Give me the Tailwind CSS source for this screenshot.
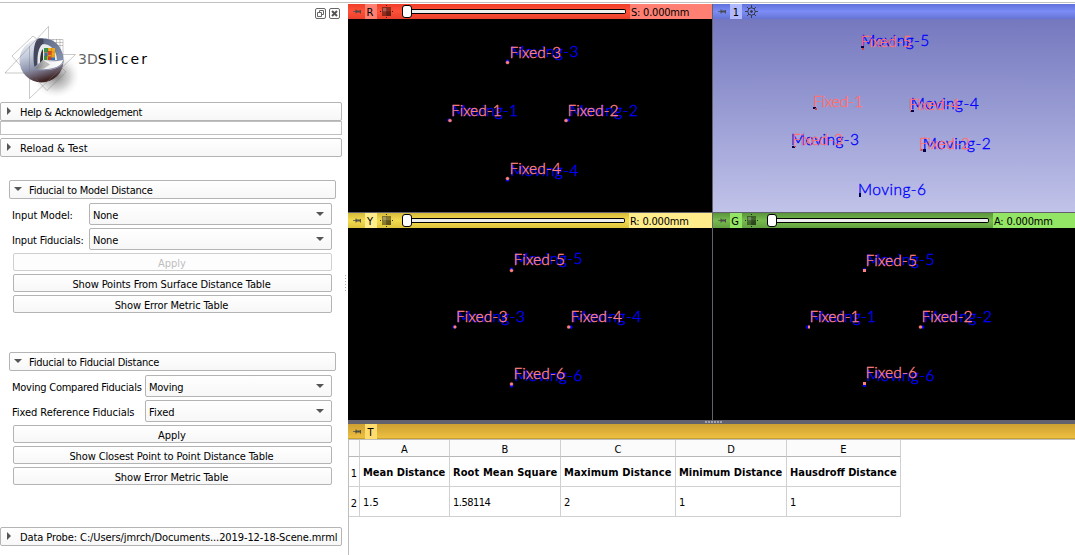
<!DOCTYPE html>
<html lang="en">
<head>
<meta charset="utf-8">
<title>3D Slicer</title>
<script src="https://cdn.jsdelivr.net/npm/@tailwindcss/browser@4"></script>
</head>
<body class="h-[555px] w-[1075px] overflow-hidden bg-white font-['DejaVu_Sans_Condensed','DejaVu_Sans',sans-serif] text-[11px] leading-[14px] text-black">
<svg class="hidden">
  <defs>
    <symbol id="pin" viewBox="0 0 10 9"><path d="M1 4.5h3" stroke="#555" stroke-opacity=".8"/><path d="M4 2.500v4" stroke="#444"/><path d="M4 3.500h4v2h-4z" fill="#444" fill-opacity=".9"/><path d="M8.500 3v3.500" stroke="#444" stroke-opacity=".9"/></symbol>
    <symbol id="cross" viewBox="0 0 13 13"><path d="M6.500 0v1M6.500 12v1M0 6.500h1M12 6.500h1" stroke="#000" stroke-opacity=".8"/><path d="M2 2h9v9H2z" fill="#000" fill-opacity=".42"/><path d="M3 3h3.500v3.500H3z" fill="#fff" fill-opacity=".25"/><path d="M6.500 6.500H11V11H6.500z" fill="#000" fill-opacity=".3"/><path d="M6.500 2v9M2 6.500h9" stroke="#000" stroke-opacity=".12"/></symbol>
    <symbol id="down" viewBox="0 0 8 4"><path d="M0 0h8L4 4z" fill="#555"/></symbol>
    <symbol id="right" viewBox="0 0 4 8"><path d="M0 0v8l4-4z" fill="#555"/></symbol>
  </defs>
</svg>
<div class="flex h-full flex-col">
  <div class="mt-[2px] h-px shrink-0 bg-[#c0c0c0]"></div>
  <div class="flex min-h-0 flex-1">

    <aside class="flex w-[348px] shrink-0 flex-col">
      <div class="flex h-[20px] shrink-0 justify-end gap-[3px] pt-[5px] pr-[8px]">
        <svg class="h-[11px] w-[11px]" viewBox="0 0 11 11" fill="none" stroke="#666"><rect x=".5" y=".5" width="10" height="10" rx="1.5"/><path d="M4.500 4V2.500h4v4H7M2.500 4.500h4v4h-4z"/></svg>
        <svg class="h-[11px] w-[11px]" viewBox="0 0 11 11" fill="none" stroke="#666"><rect x=".5" y=".5" width="10" height="10" rx="1.5"/><path d="M3 3l5 5M8 3L3 8" stroke-width="2" stroke="#555"/></svg>
      </div>
      <div class="flex h-[79px] shrink-0">
        <svg class="h-[79px] w-[78px]" viewBox="0 23 78 79">
          <defs>
            <radialGradient id="sh"><stop offset="0" stop-color="#555" stop-opacity=".75"/><stop offset=".55" stop-color="#888" stop-opacity=".35"/><stop offset="1" stop-color="#fff" stop-opacity="0"/></radialGradient>
            <linearGradient id="ball" x1=".1" y1="0" x2=".4" y2="1"><stop offset="0" stop-color="#f3f6fb"/><stop offset=".4" stop-color="#c3cadb"/><stop offset=".68" stop-color="#8d93ad"/><stop offset=".85" stop-color="#665a68"/><stop offset="1" stop-color="#3e2423"/></linearGradient>
            <linearGradient id="rim" x1="0" y1="0" x2="1" y2="1"><stop offset="0" stop-color="#5b6684"/><stop offset="1" stop-color="#8695b2"/></linearGradient>
            <linearGradient id="dish" x1="0" y1="0" x2="1" y2="0"><stop offset="0" stop-color="#888"/><stop offset=".35" stop-color="#eee"/><stop offset="1" stop-color="#fff"/></linearGradient>
          </defs>
          <ellipse cx="56" cy="76" rx="25" ry="23" fill="url(#sh)"/>
          <circle cx="41.500" cy="60.500" r="22" fill="url(#ball)"/>
          <path d="M42 38.500c12-1 21 8 21.500 22L43 61z" fill="url(#rim)"/>
          <path d="M42.500 44c8 0 14 6 14.500 16l-14 1z" fill="#e6ecee"/>
          <path d="M44 48h11v12H44z" fill="#f0a818"/>
          <path d="M44 48h4v4h-4zM44 56h3v4h-3z" fill="#39934a"/><path d="M48 51h3.500v4H48z" fill="#e84622"/><path d="M44.500 52.500h3v3.500h-3zM51 57.500h4V60h-4z" fill="#2d6fc0"/><path d="M48 56.500h3V60h-3z" fill="#d23a25"/>
          <path d="M47.800 48v12M51.500 48v12M44 52h11M44 56h11" stroke="#653" stroke-opacity=".4" stroke-width=".6"/>
          <path d="M34.500 67c-2-12-.5-27 4-28.500 2-.5 4-.5 5 .5v5c-4 3-5 11-4.500 19z" fill="#45475f"/>
          <path d="M37.500 64.500c-.5-9 1-18 5.500-20.500V60z" fill="#e8eaee"/>
          <path d="M40 63c0-7 1-12 3-14v11z" fill="#333"/>
          <path d="M35 69l8-9c7 2 13 1.500 20.500 0 1 7-13 12-28.500 9z" fill="url(#dish)"/>
          <path d="M43 60l-8 9 9-.5 6-4z" fill="#555" fill-opacity=".35"/>
          <path d="M35 69c12 2.500 27-1 28.500-8.500" fill="none" stroke="#8b90a8" stroke-width="1.200"/>
          <path d="M48.500 26.500L5 73h24M48.500 26.500V39M29.500 70v28.500l46-44H63M29.500 46v24M33 36l-21 20 8 9M33 36l6 5M36 79l11 11.500L66 72l-6-6M49 39.500h14V58M50 42.500h13M54 45.500h9M53 39v3M56.500 39v5M60 39v9" fill="none" stroke="#777" stroke-opacity=".5" stroke-width=".8"/>
        </svg>
        <div class="pt-[27px] font-['DejaVu_Sans'] text-[14px] leading-[18px]"><span class="text-[#666]">3D</span><span class="tracking-[2.1px]">Slicer</span></div>
      </div>
      <div class="flex h-[19px] w-[342px] shrink-0 items-center rounded-[2px] border border-[#b4b4b4] bg-linear-to-b from-white to-[#f7f7f7] pl-[6px]"><svg class="mb-px h-[8px] w-[4px] shrink-0"><use href="#right"/></svg><span class="ml-[9px] pt-[2px] tracking-[-0.27px]">Help &amp; Acknowledgement</span></div>
      <div class="h-[14px] w-[342px] shrink-0 border border-[#c0c0c0]"></div>
      <div class="mt-[3px] flex h-[19px] w-[342px] shrink-0 items-center rounded-[2px] border border-[#b4b4b4] bg-linear-to-b from-white to-[#f7f7f7] pl-[6px]"><svg class="mb-px h-[8px] w-[4px] shrink-0"><use href="#right"/></svg><span class="ml-[9px] pt-[2px] tracking-[0.05px]">Reload &amp; Test</span></div>

      <div class="flex">
      <div class="w-[342px]">
      <section class="mt-[23px] pl-[9px]">
        <div class="flex h-[19px] w-[327px] items-center rounded-[2px] border border-[#b4b4b4] bg-linear-to-b from-white to-[#f7f7f7] pl-[4px]"><svg class="mb-px h-[4px] w-[8px]"><use href="#down"/></svg><span class="ml-[7px] pt-[2px] tracking-[-0.23px]">Fiducial to Model Distance</span></div>
        <div class="flex flex-col gap-[3px] pt-[4px] pl-[3px]">
          <div class="flex h-[22px] items-center"><span class="w-[77px] pt-[4px] tracking-[-0.08px] whitespace-nowrap">Input Model:</span><div class="flex h-[22px] w-[243px] items-center justify-between rounded-[2px] border border-[#b4b4b4] bg-linear-to-b from-white to-[#f7f7f7] pr-[7px] pl-[3px]"><span class="pt-[4px] tracking-[-0.2px]">None</span><svg class="h-[4px] w-[8px]"><use href="#down"/></svg></div></div>
          <div class="flex h-[22px] items-center"><span class="w-[77px] pt-[4px] tracking-[-0.18px] whitespace-nowrap">Input Fiducials:</span><div class="flex h-[22px] w-[243px] items-center justify-between rounded-[2px] border border-[#b4b4b4] bg-linear-to-b from-white to-[#f7f7f7] pr-[7px] pl-[3px]"><span class="pt-[4px] tracking-[-0.2px]">None</span><svg class="h-[4px] w-[8px]"><use href="#down"/></svg></div></div>
          <div class="ml-px flex h-[18px] w-[319px] items-center justify-center rounded-[2px] border border-[#cfcfcf] bg-[#fdfdfd] pt-[4px] pr-px text-[#bebebe]">Apply</div>
          <div class="ml-px flex h-[18px] w-[319px] items-center justify-center rounded-[2px] border border-[#b4b4b4] bg-linear-to-b from-white to-[#f7f7f7] pt-[4px] pr-[2px] tracking-[-0.12px]">Show Points From Surface Distance Table</div>
          <div class="ml-px flex h-[18px] w-[319px] items-center justify-center rounded-[2px] border border-[#b4b4b4] bg-linear-to-b from-white to-[#f7f7f7] pt-[4px] pr-[2px] tracking-[-0.12px]">Show Error Metric Table</div>
        </div>
      </section>
      <section class="mt-[39px] pl-[9px]">
        <div class="flex h-[19px] w-[327px] items-center rounded-[2px] border border-[#b4b4b4] bg-linear-to-b from-white to-[#f7f7f7] pl-[4px]"><svg class="mb-px h-[4px] w-[8px]"><use href="#down"/></svg><span class="ml-[7px] pt-[2px] tracking-[-0.24px]">Fiducial to Fiducial Distance</span></div>
        <div class="flex flex-col gap-[3px] pt-[4px] pl-[3px]">
          <div class="flex h-[22px] items-center"><span class="w-[133px] pt-[4px] tracking-[-0.24px] whitespace-nowrap">Moving Compared Fiducials</span><div class="flex h-[22px] w-[187px] items-center justify-between rounded-[2px] border border-[#b4b4b4] bg-linear-to-b from-white to-[#f7f7f7] pr-[7px] pl-[3px]"><span class="pt-[4px] tracking-[-0.25px]">Moving</span><svg class="h-[4px] w-[8px]"><use href="#down"/></svg></div></div>
          <div class="flex h-[22px] items-center"><span class="w-[133px] pt-[4px] tracking-[-0.06px] whitespace-nowrap">Fixed Reference Fiducials</span><div class="flex h-[22px] w-[187px] items-center justify-between rounded-[2px] border border-[#b4b4b4] bg-linear-to-b from-white to-[#f7f7f7] pr-[7px] pl-[3px]"><span class="pt-[4px]">Fixed</span><svg class="h-[4px] w-[8px]"><use href="#down"/></svg></div></div>
          <div class="ml-px flex h-[18px] w-[319px] items-center justify-center rounded-[2px] border border-[#b4b4b4] bg-linear-to-b from-white to-[#f7f7f7] pt-[4px] pr-px">Apply</div>
          <div class="ml-px flex h-[18px] w-[319px] items-center justify-center rounded-[2px] border border-[#b4b4b4] bg-linear-to-b from-white to-[#f7f7f7] pt-[4px] pr-[2px] tracking-[-0.12px]">Show Closest Point to Point Distance Table</div>
          <div class="ml-px flex h-[18px] w-[319px] items-center justify-center rounded-[2px] border border-[#b4b4b4] bg-linear-to-b from-white to-[#f7f7f7] pt-[4px] pr-[2px] tracking-[-0.12px]">Show Error Metric Table</div>
        </div>
      </section>
      </div>
      <div class="mt-[118px] ml-[3px] h-[16px] w-px bg-[repeating-linear-gradient(to_bottom,#b0b0b0_0_1px,transparent_1px_3px)]"></div>
      </div>
      <div class="mt-[42px] flex h-[19px] w-[342px] shrink-0 items-center rounded-[2px] border border-[#b4b4b4] bg-linear-to-b from-white to-[#f7f7f7] pl-[6px] whitespace-nowrap"><svg class="mb-px h-[8px] w-[4px] shrink-0"><use href="#right"/></svg><span class="ml-[9px] pt-[2px] tracking-[-0.1px]">Data Probe: C:/Users/jmrch/Documents...2019-12-18-Scene.mrml</span></div>
    </aside>

    <main class="flex min-w-0 flex-1 flex-col pt-px">
      <div class="grid shrink-0 grid-cols-[364px_362px] grid-rows-[208px_207px] gap-px bg-[#62626f]">
        <div class="flex flex-col bg-black">
          <div class="flex h-[15px] items-center bg-linear-to-b from-[#ef3f2a] via-[#ff5038] to-[#e9402c]">
            <svg class="ml-[4px] h-[9px] w-[10px]"><use href="#pin"/></svg>
            <div class="ml-[3px] h-[15px] w-[12px] bg-[#ff8073] pr-[2px] text-center leading-[17px]">R</div>
            <svg class="ml-[3px] h-[13px] w-[13px]"><use href="#cross"/></svg>
            <div class="ml-[9px] h-[13px] w-[10px] rounded-[3px] border border-black bg-white"></div>
            <div class="h-[5px] w-[214px] rounded-r-[2px] border border-l-0 border-black bg-[#eee]"></div>
            <div class="ml-[4px] h-[15px] w-[82px] bg-[#ff8073] pl-[1px] leading-[17px] tracking-[-0.22px] whitespace-nowrap">S: 0.000mm</div>
          </div>
          <svg class="h-[193px] w-[364px] font-['Lato_Light','Lato'] text-[15.5px] font-light" viewBox="348 19 364 193" stroke-width=".35">
            <g fill="#0000ff" stroke="#0000ff"><circle cx="507.500" cy="61" r="1.500"/><circle cx="448.700" cy="120" r="1.300"/><circle cx="568" cy="120" r="1.500"/><circle cx="507.500" cy="180" r="1.500"/>
              <text x="510.500" y="57" textLength="68">Moving-3</text><text x="452" y="116" textLength="66">Moving-1</text><text x="570" y="116" textLength="68">Moving-2</text><text x="510.500" y="176" textLength="68">Moving-4</text></g>
            <g fill="#ff8080" stroke="#ff8080"><circle cx="507.500" cy="62.500" r="1.600"/><circle cx="450" cy="120.500" r="1.600"/><circle cx="566" cy="120.500" r="1.600"/><circle cx="507.500" cy="178.500" r="1.600"/>
              <text x="509.500" y="58" textLength="51.500">Fixed-3</text><text x="451" y="116" textLength="50.500">Fixed-1</text><text x="567.500" y="116" textLength="51">Fixed-2</text><text x="509.500" y="174" textLength="51.500">Fixed-4</text></g>
          </svg>
        </div>
        <div class="flex flex-col">
          <div class="flex h-[15px] items-center bg-linear-to-b from-[#6272dc] via-[#7b8cf6] to-[#6674d2]">
            <svg class="ml-[4px] h-[9px] w-[10px]"><use href="#pin"/></svg>
            <div class="ml-[3px] h-[15px] w-[12px] bg-[#b0b9fb] text-center leading-[17px]">1</div>
            <svg class="ml-[3px] h-[13px] w-[13px]" viewBox="0 0 13 13" fill="none" stroke="#3a3a48"><circle cx="6.500" cy="6.500" r="3.700"/><circle cx="6.500" cy="6.500" r="1" fill="#333"/><path d="M6.500 0v3M6.500 10v3M0 6.500h3M10 6.500h3M2 2l2 2M9 9l2 2M11 2L9 4M4 9l-2 2"/></svg>
          </div>
          <svg class="h-[193px] w-[362px] bg-linear-to-b from-[#7578be] to-[#c1c3e9] font-['Lato_Light','Lato'] text-[15.5px] font-light" viewBox="713 19 362 193" stroke-width=".35">
            <g fill="#0000ff" stroke="#0000ff"><text x="861.300" y="46" textLength="68">Moving-5</text><text x="910.700" y="109" textLength="68">Moving-4</text><text x="791" y="145" textLength="68">Moving-3</text><text x="922.700" y="149" textLength="68">Moving-2</text><text x="858" y="195" textLength="68">Moving-6</text></g>
            <g fill="#ff7070" stroke="#ff7070"><text x="860.500" y="47" textLength="51">Fixed-5</text><text x="813" y="107" textLength="50">Fixed-1</text><text x="908.500" y="110" textLength="51">Fixed-4</text><text x="792" y="145" textLength="51">Fixed-3</text><text x="919" y="148.500" textLength="51">Fixed-2</text></g>
            <g fill="#00004a"><path d="M861 46h3v2h-3zM813 107h3v2h-3zM911 110h3v2h-3zM792 146h3v2h-3zM923 149h3v3h-3zM859 193h2v4h-2z"/></g>
            <g fill="#c44"><path d="M862 48h2v2h-2zM815 108h2v2h-2zM910 111h1v1h-1zM794 146h2v1h-2zM920.500 149h2v2h-2z"/></g>
          </svg>
        </div>
        <div class="flex flex-col bg-black">
          <div class="flex h-[15px] items-center bg-linear-to-b from-[#d6bb3a] via-[#f3db50] to-[#dec43c]">
            <svg class="ml-[4px] h-[9px] w-[10px]"><use href="#pin"/></svg>
            <div class="ml-[3px] h-[15px] w-[12px] bg-[#ffed8c] pr-[2px] text-center leading-[17px]">Y</div>
            <svg class="ml-[3px] h-[13px] w-[13px]"><use href="#cross"/></svg>
            <div class="ml-[9px] h-[13px] w-[10px] rounded-[3px] border border-black bg-white"></div>
            <div class="h-[5px] w-[213px] rounded-r-[2px] border border-l-0 border-black bg-[#eee]"></div>
            <div class="ml-[4px] h-[15px] w-[83px] bg-[#ffed8c] pl-[1px] leading-[17px] tracking-[-0.2px] whitespace-nowrap">R: 0.000mm</div>
          </div>
          <svg class="h-[192px] w-[364px] font-['Lato_Light','Lato'] text-[15.5px] font-light" viewBox="348 228 364 192" stroke-width=".35">
            <g fill="#0000ff" stroke="#0000ff"><circle cx="511.500" cy="269" r="1.500"/><circle cx="454" cy="327" r="1.500"/><circle cx="571" cy="327" r="1.500"/><circle cx="511.500" cy="386" r="1.500"/>
              <text x="514.500" y="264" textLength="68">Moving-5</text><text x="457" y="322" textLength="68">Moving-3</text><text x="572.500" y="322" textLength="69">Moving-4</text><text x="514.500" y="381" textLength="68">Moving-6</text></g>
            <g fill="#ff8080" stroke="#ff8080"><circle cx="511.500" cy="270.500" r="1.600"/><circle cx="455" cy="327" r="1.400"/><circle cx="568.700" cy="327" r="1.600"/><circle cx="511.500" cy="384" r="1.600"/>
              <text x="513.500" y="265" textLength="51.500">Fixed-5</text><text x="456" y="322" textLength="51.500">Fixed-3</text><text x="570.500" y="322" textLength="51.500">Fixed-4</text><text x="513.500" y="379" textLength="51.500">Fixed-6</text></g>
          </svg>
        </div>
        <div class="flex flex-col bg-black">
          <div class="flex h-[15px] items-center bg-linear-to-b from-[#5b943b] via-[#77bb4f] to-[#639f40]">
            <svg class="ml-[4px] h-[9px] w-[10px]"><use href="#pin"/></svg>
            <div class="ml-[3px] h-[15px] w-[12px] bg-[#93e565] pr-[2px] text-center leading-[17px]">G</div>
            <svg class="ml-[3px] h-[13px] w-[13px]"><use href="#cross"/></svg>
            <div class="ml-[9px] h-[13px] w-[10px] rounded-[3px] border border-black bg-white"></div>
            <div class="h-[5px] w-[212px] rounded-r-[2px] border border-l-0 border-black bg-[#eee]"></div>
            <div class="ml-[4px] h-[15px] w-[82px] bg-[#93e565] pl-[1px] leading-[17px] tracking-[-0.2px] whitespace-nowrap">A: 0.000mm</div>
          </div>
          <svg class="h-[192px] w-[362px] font-['Lato_Light','Lato'] text-[15.5px] font-light" viewBox="713 228 362 192" stroke-width=".35">
            <g fill="#0000ff" stroke="#0000ff"><circle cx="864.500" cy="269.500" r="1.500"/><circle cx="807.500" cy="327" r="1.500"/><circle cx="922.700" cy="327" r="1.500"/><circle cx="864.500" cy="385.500" r="1.500"/>
              <text x="866.500" y="265" textLength="68">Moving-5</text><text x="810" y="322" textLength="66">Moving-1</text><text x="924" y="322" textLength="68">Moving-2</text><text x="866.500" y="381" textLength="68">Moving-6</text></g>
            <g fill="#ff8080" stroke="#ff8080"><path d="M863 269h3v3h-3zM808 325.500h2v3h-2zM863 382h3v3h-3z" stroke="none"/><circle cx="920.500" cy="327" r="1.600"/>
              <text x="865.500" y="266" textLength="51.500">Fixed-5</text><text x="809.500" y="322" textLength="50">Fixed-1</text><text x="921.500" y="322" textLength="51">Fixed-2</text><text x="865.500" y="378" textLength="51.500">Fixed-6</text></g>
          </svg>
        </div>
      </div>
      <div class="flex h-[4px] shrink-0 items-center bg-[#62626f] pl-[357px]"><div class="h-[2px] w-[17px] bg-[repeating-linear-gradient(to_right,#a3a3ad_0_2px,transparent_2px_3px)]"></div></div>
      <div class="flex h-[15px] shrink-0 items-center border-b border-[#c8a030] bg-linear-to-b from-[#cda033] to-[#edbf40]">
        <svg class="ml-[4px] h-[9px] w-[10px]"><use href="#pin"/></svg>
        <div class="ml-[3px] h-[15px] w-[12px] bg-[#ffdc6e] pr-px text-center leading-[17px]">T</div>
      </div>
      <div class="flex-1 border-t border-l border-[#bdbdbd]">
        <div class="grid w-[552px] grid-cols-[11px_90px_111px_115px_111px_114px] grid-rows-[17px_30px_30px] [&>div]:flex [&>div]:items-center [&>div]:border-r [&>div]:border-b [&>div]:border-[#d0d0d0] [&>div]:pt-[2px] [&>div]:whitespace-nowrap [&>div:nth-child(-n+6)]:justify-center [&>div:nth-child(-n+6)]:border-b-[#b8b8b8] [&>div:nth-child(-n+6)]:bg-[#fbfbfb] [&>div:nth-child(-n+6)]:pt-[4px]">
          <div></div><div>A</div><div>B</div><div>C</div><div>D</div><div>E</div>
          <div class="justify-center"><span class="pt-[2px]">1</span></div><div class="pl-[3px] font-bold">Mean Distance</div><div class="pl-[3px] font-bold tracking-[0.1px]">Root Mean Square</div><div class="pl-[3px] font-bold tracking-[0.1px]">Maximum Distance</div><div class="pl-[3px] font-bold">Minimum Distance</div><div class="pl-[3px] font-bold">Hausdroff Distance</div>
          <div class="justify-center"><span class="pt-[2px]">2</span></div><div class="pl-[3px]">1.5</div><div class="pl-[3px] tracking-[-0.5px]">1.58114</div><div class="pl-[3px]">2</div><div class="pl-[3px]">1</div><div class="pl-[3px]">1</div>
        </div>
      </div>
    </main>
  </div>
</div>
</body>
</html>
